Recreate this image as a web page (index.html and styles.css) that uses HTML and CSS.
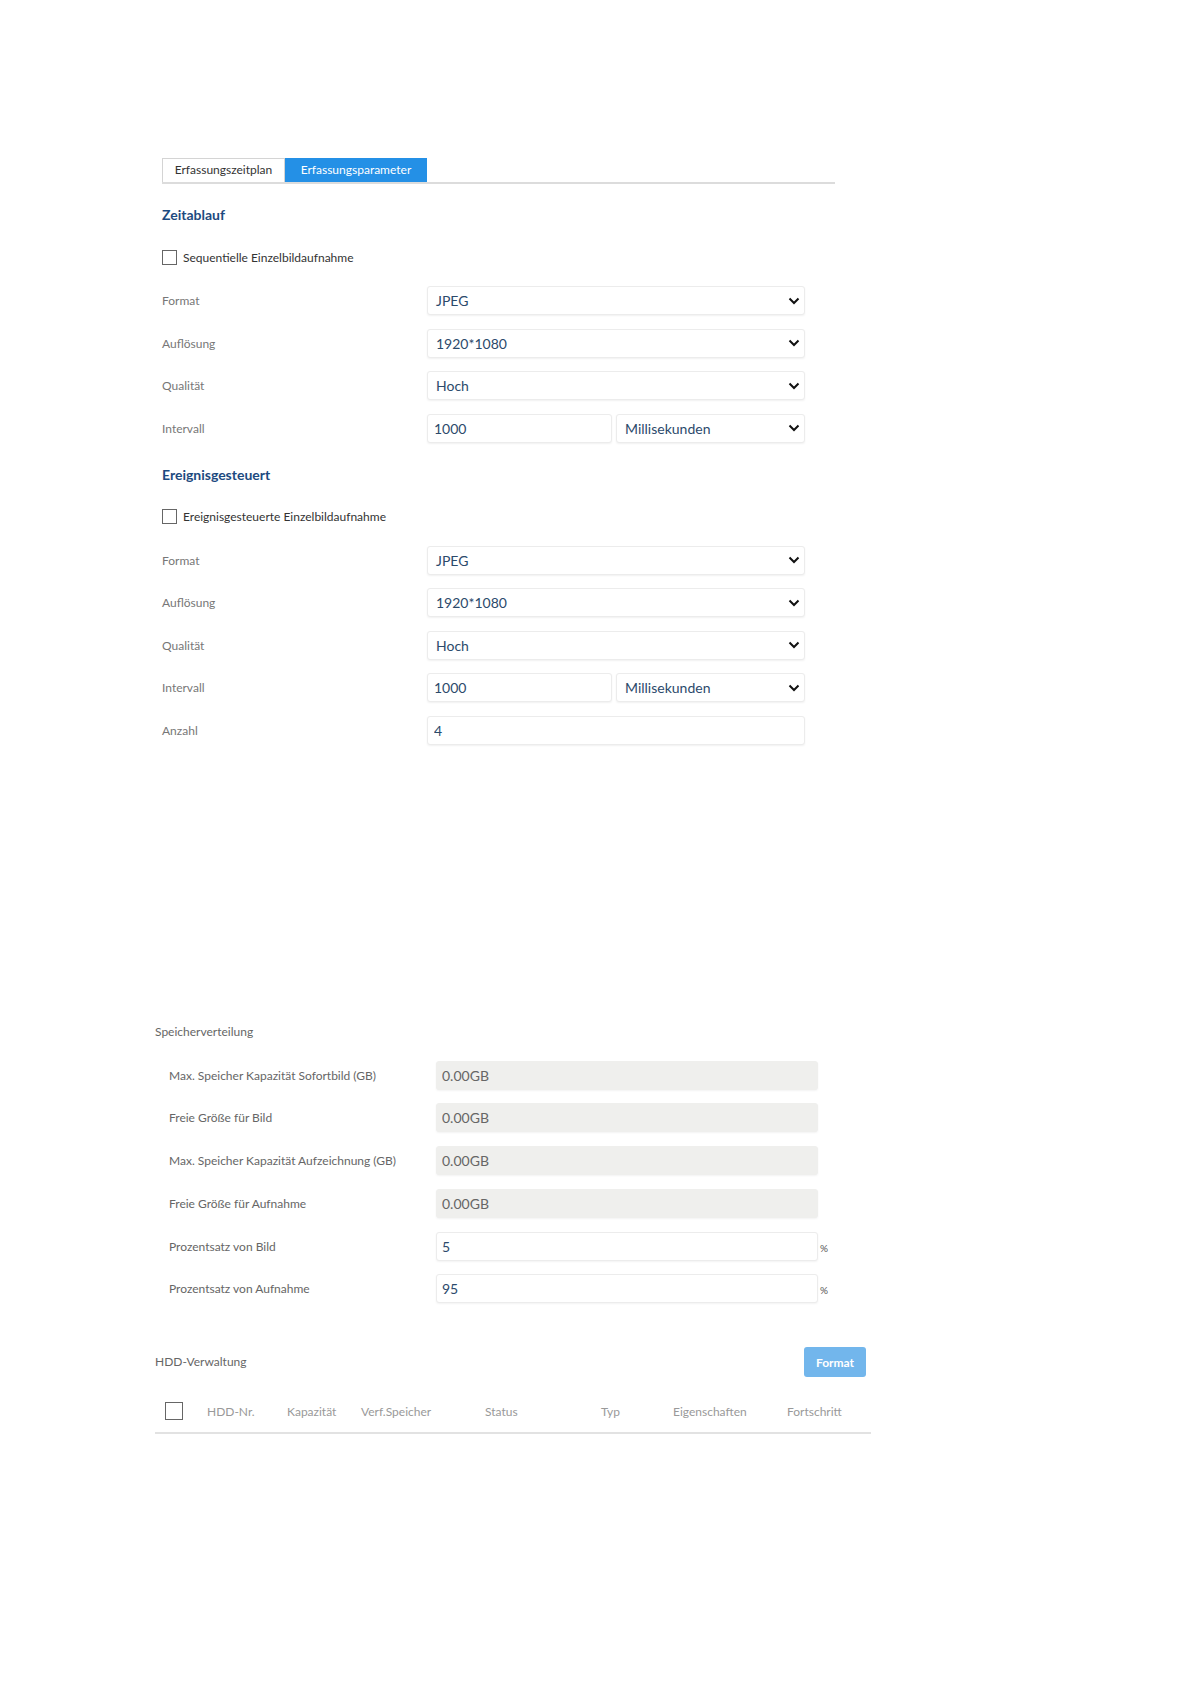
FILE: index.html
```html
<!DOCTYPE html>
<html lang="de">
<head>
    <meta charset="UTF-8">
    <meta name="viewport" content="width=device-width, initial-scale=1.0">
    <title>Erfassungsparameter</title>
    <link rel="stylesheet" href="styles.css">
</head>
<body>

    <div class="capture">
        <div class="tabs">
            <div class="tab">Erfassungszeitplan</div>
            <div class="tab active">Erfassungsparameter</div>
        </div>

        <!-- Zeitablauf -->
        <h2 class="section-title">Zeitablauf</h2>
        <label class="check-row"><span class="box"></span>Sequentielle Einzelbildaufnahme</label>
        <div class="rows">
            <div class="row">
                <span class="label">Format</span>
                <div class="select wide"><span>JPEG</span><svg width="12" height="8" viewBox="0 0 12 8"><path d="M1.5 1.5 6 6l4.5-4.5" fill="none" stroke="#111" stroke-width="2"/></svg></div>
            </div>
            <div class="row">
                <span class="label">Auflösung</span>
                <div class="select wide"><span>1920*1080</span><svg width="12" height="8" viewBox="0 0 12 8"><path d="M1.5 1.5 6 6l4.5-4.5" fill="none" stroke="#111" stroke-width="2"/></svg></div>
            </div>
            <div class="row">
                <span class="label">Qualität</span>
                <div class="select wide"><span>Hoch</span><svg width="12" height="8" viewBox="0 0 12 8"><path d="M1.5 1.5 6 6l4.5-4.5" fill="none" stroke="#111" stroke-width="2"/></svg></div>
            </div>
            <div class="row">
                <span class="label">Intervall</span>
                <input class="field half" type="text" value="1000">
                <div class="select unit"><span>Millisekunden</span><svg width="12" height="8" viewBox="0 0 12 8"><path d="M1.5 1.5 6 6l4.5-4.5" fill="none" stroke="#111" stroke-width="2"/></svg></div>
            </div>
        </div>

        <!-- Ereignisgesteuert -->
        <h2 class="section-title second">Ereignisgesteuert</h2>
        <label class="check-row"><span class="box"></span>Ereignisgesteuerte Einzelbildaufnahme</label>
        <div class="rows">
            <div class="row">
                <span class="label">Format</span>
                <div class="select wide"><span>JPEG</span><svg width="12" height="8" viewBox="0 0 12 8"><path d="M1.5 1.5 6 6l4.5-4.5" fill="none" stroke="#111" stroke-width="2"/></svg></div>
            </div>
            <div class="row">
                <span class="label">Auflösung</span>
                <div class="select wide"><span>1920*1080</span><svg width="12" height="8" viewBox="0 0 12 8"><path d="M1.5 1.5 6 6l4.5-4.5" fill="none" stroke="#111" stroke-width="2"/></svg></div>
            </div>
            <div class="row">
                <span class="label">Qualität</span>
                <div class="select wide"><span>Hoch</span><svg width="12" height="8" viewBox="0 0 12 8"><path d="M1.5 1.5 6 6l4.5-4.5" fill="none" stroke="#111" stroke-width="2"/></svg></div>
            </div>
            <div class="row">
                <span class="label">Intervall</span>
                <input class="field half" type="text" value="1000">
                <div class="select unit"><span>Millisekunden</span><svg width="12" height="8" viewBox="0 0 12 8"><path d="M1.5 1.5 6 6l4.5-4.5" fill="none" stroke="#111" stroke-width="2"/></svg></div>
            </div>
            <div class="row">
                <span class="label">Anzahl</span>
                <input class="field wide" type="text" value="4">
            </div>
        </div>
    </div>

    <div class="storage">
        <div class="group-title">Speicherverteilung</div>
        <div class="srows">
            <div class="srow">
                <span class="slabel">Max. Speicher Kapazität Sofortbild (GB)</span>
                <input class="sfield readonly" type="text" value="0.00GB" readonly>
            </div>
            <div class="srow">
                <span class="slabel">Freie Größe für Bild</span>
                <input class="sfield readonly" type="text" value="0.00GB" readonly>
            </div>
            <div class="srow">
                <span class="slabel">Max. Speicher Kapazität Aufzeichnung (GB)</span>
                <input class="sfield readonly" type="text" value="0.00GB" readonly>
            </div>
            <div class="srow">
                <span class="slabel">Freie Größe für Aufnahme</span>
                <input class="sfield readonly" type="text" value="0.00GB" readonly>
            </div>
            <div class="srow">
                <span class="slabel">Prozentsatz von Bild</span>
                <input class="sfield" type="text" value="5">
                <span class="pct">%</span>
            </div>
            <div class="srow">
                <span class="slabel">Prozentsatz von Aufnahme</span>
                <input class="sfield" type="text" value="95">
                <span class="pct">%</span>
            </div>
        </div>

        <div class="hdd-head">
            <div class="group-title">HDD-Verwaltung</div>
            <button class="format-btn">Format</button>
        </div>

        <div class="hdd-table">
            <span class="cell"><span class="box big"></span></span>
            <span class="cell">HDD-Nr.</span>
            <span class="cell">Kapazität</span>
            <span class="cell">Verf.Speicher</span>
            <span class="cell">Status</span>
            <span class="cell">Typ</span>
            <span class="cell">Eigenschaften</span>
            <span class="cell">Fortschritt</span>
        </div>
    </div>

</body>
</html>
```

FILE: styles.css
```css
body {
    margin: 0;
    padding: 0;
    font-family: Lato, "Open Sans", Arial, sans-serif;
    color: #333;
    background: #fff;
}
.capture {
    width: 673px;
    margin-left: 162px;
    padding-top: 158px;
}
.tabs {
    display: flex;
    height: 24px;
    border-bottom: 2px solid #dcdcdc;
}
.tab {
    font-size: 12px;
    line-height: 22px;
    padding: 0 10px;
    width: 123px;
    box-sizing: border-box;
    border: 1px solid #d4d4d4;
    border-bottom: none;
    color: #333;
    text-align: center;
}
.tab.active {
    width: 142px;
    background-color: #2490e6;
    border-color: #2490e6;
    color: #fff;
}
.section-title {
    margin: 21px 0 0;
    font-size: 14px;
    line-height: 20px;
    font-weight: bold;
    color: #1d4a80;
}
.section-title.second {
    margin-top: 22px;
}
.check-row {
    display: flex;
    align-items: center;
    height: 20px;
    margin-top: 22px;
    font-size: 12px;
    color: #333;
}
.box {
    display: inline-block;
    width: 13px;
    height: 13px;
    border: 1px solid #666;
    margin-right: 6px;
    background: #fff;
}
.box.big {
    width: 16px;
    height: 16px;
    margin: 0;
}
.rows {
    display: flex;
    flex-direction: column;
    gap: 13.5px;
    margin-top: 19px;
}
.row {
    display: flex;
    align-items: center;
    height: 29px;
}
.label {
    width: 265px;
    font-size: 12px;
    color: #777;
}
.select,
.field {
    height: 29px;
    box-sizing: border-box;
    border: 1px solid #ececec;
    border-radius: 3px;
    box-shadow: 0 1px 2px rgba(0, 0, 0, 0.06);
    background: #fff;
    font-family: Lato, "Open Sans", Arial, sans-serif;
    font-size: 14px;
    color: #2c4a6b;
}
.select {
    display: flex;
    align-items: center;
    justify-content: space-between;
    padding: 0 4px 0 8px;
}
.select svg {
    display: block;
}
.field {
    padding: 0 6px;
    outline: none;
}
.wide {
    width: 378px;
}
.half {
    width: 185px;
}
.unit {
    width: 189px;
    margin-left: 4px;
}
.storage {
    width: 716px;
    margin-left: 155px;
    margin-top: 277px;
}
.group-title {
    font-size: 12px;
    line-height: 20px;
    color: #666;
}
.srows {
    display: flex;
    flex-direction: column;
    gap: 13.8px;
    margin-top: 19px;
}
.srow {
    display: flex;
    align-items: center;
    height: 29px;
    padding-left: 14px;
}
.slabel {
    width: 267px;
    font-size: 12px;
    color: #666;
}
.sfield {
    width: 382px;
    height: 29px;
    box-sizing: border-box;
    padding: 0 5px;
    border: 1px solid #ececec;
    border-radius: 3px;
    box-shadow: 0 1px 2px rgba(0, 0, 0, 0.05);
    font-family: Lato, "Open Sans", Arial, sans-serif;
    font-size: 14px;
    color: #2c4a6b;
    background: #fff;
    outline: none;
}
.sfield.readonly {
    background-color: #efefed;
    border-color: #efefed;
    color: #666;
}
.pct {
    font-size: 10px;
    color: #555;
    margin-left: 2px;
    padding-top: 3px;
}
.hdd-head {
    display: flex;
    align-items: center;
    justify-content: space-between;
    margin-top: 44px;
    padding-right: 5px;
}
.format-btn {
    width: 62px;
    height: 30px;
    border: none;
    border-radius: 3px;
    background-color: #72b6ec;
    color: #fff;
    font-family: Lato, "Open Sans", Arial, sans-serif;
    font-size: 12px;
    font-weight: bold;
    cursor: pointer;
}
.hdd-table {
    display: grid;
    grid-template-columns: 52px 80px 74px 124px 116px 72px 114px 84px;
    align-items: center;
    height: 42px;
    margin-top: 13px;
    border-bottom: 2px solid #e2e2e2;
    font-size: 12px;
    color: #999;
}
.cell:first-child {
    padding-left: 10px;
    display: flex;
}
```
